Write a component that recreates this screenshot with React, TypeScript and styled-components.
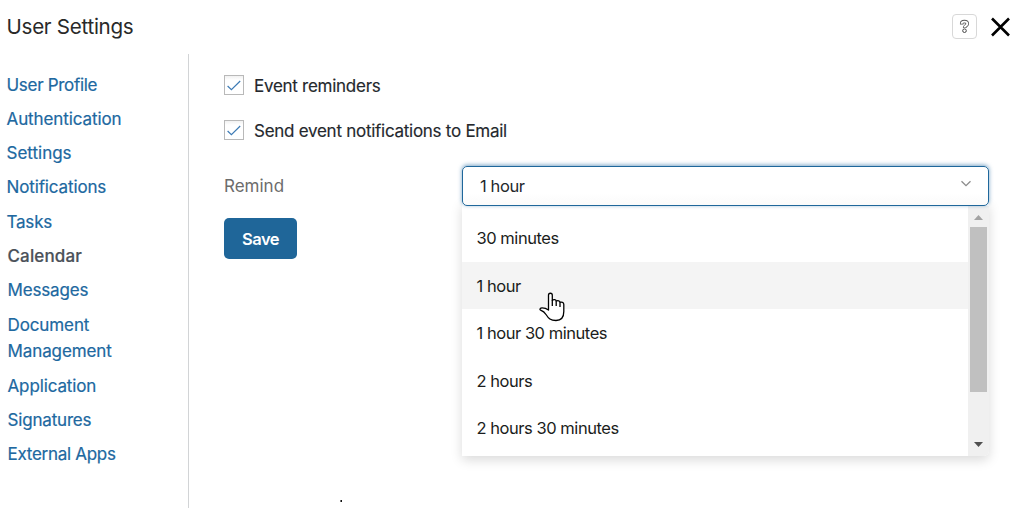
import React from "react";
import styled, { createGlobalStyle } from "styled-components";

const GlobalStyle = createGlobalStyle`
  * { box-sizing: border-box; }
  html, body { margin: 0; padding: 0; background: #fff; }
  body {
    font-family: Inter, "Liberation Sans", sans-serif;
    font-size: 17px;
    color: #24282d;
    overflow: hidden;
  }
`;

const Page = styled.div`
  width: 1016px;
  height: 508px;
  display: flex;
  flex-direction: column;
  overflow: hidden;
`;

const Header = styled.header`
  height: 54px;
  flex: none;
  display: flex;
  justify-content: space-between;
  padding: 13px 5px 0 6.5px;
`;

const Title = styled.h1`
  margin: 0;
  font-size: 20.6px;
  line-height: 27px;
  font-weight: 400;
  color: #292929;
  letter-spacing: -0.28px;
`;

const HeaderActions = styled.div`
  display: flex;
  align-items: flex-start;
  gap: 13px;
`;

const HelpButton = styled.button`
  width: 25px;
  height: 25px;
  margin-top: 1px;
  padding: 0;
  display: flex;
  align-items: center;
  justify-content: center;
  border: 1px solid #d8d8d8;
  border-radius: 4px;
  background: #fff;
`;

const CloseButton = styled.button`
  width: 21px;
  height: 20px;
  margin-top: 4px;
  padding: 0;
  border: 0;
  background: none;
  svg { display: block; }
`;

const Body = styled.div`
  flex: 1;
  display: flex;
  min-height: 0;
`;

const Sidebar = styled.nav`
  width: 189px;
  flex: none;
  border-right: 1px solid #d2d4d6;
  padding: 18px 60px 0 6.5px;
  display: flex;
  flex-direction: column;
  gap: 8px;
`;

const NavLink = styled.a<{ $active?: boolean; $spacing: number; $inset?: boolean; $lead?: boolean }>`
  line-height: 26px;
  margin-top: ${(p) => (p.$lead ? 1 : 0)}px;
  color: ${(p) => (p.$active ? "#4b5159" : "#20689f")};
  font-weight: ${(p) => (p.$active ? 500 : 400)};
  letter-spacing: ${(p) => p.$spacing}px;
  padding-left: ${(p) => (p.$inset ? 1 : 0)}px;
  -webkit-text-stroke: 0.2px currentColor;
`;

const Content = styled.main`
  flex: 1;
  display: flex;
  flex-direction: column;
  align-items: flex-start;
  padding: 19px 27px 0 35px;
`;

const CheckRow = styled.label`
  display: flex;
  align-items: center;
  gap: 10px;
  height: 26px;
  margin-bottom: 19px;
  letter-spacing: -0.27px;
  -webkit-text-stroke: 0.15px currentColor;
`;

const CheckBox = styled.span`
  width: 20px;
  height: 20px;
  margin-top: -2px;
  border: 1px solid #b9b9b9;
  background: linear-gradient(#f1f1f1, #fff 4px);
  svg { display: block; }
`;

const Field = styled.div`
  width: 765px;
  height: 41px;
  margin-top: 2px;
  display: flex;
  align-items: center;
`;

const FieldLabel = styled.span`
  width: 238px;
  color: #6c6c6c;
  letter-spacing: 0;
`;

const SelectWrap = styled.div`
  position: relative;
  width: 527px;
  height: 41px;
`;

const SelectBox = styled.div`
  position: relative;
  z-index: 2;
  height: 40px;
  margin-top: 1px;
  display: flex;
  align-items: center;
  justify-content: space-between;
  padding: 0 16px 0 17px;
  border: 1px solid #1f679b;
  border-radius: 5px;
  background: linear-gradient(#fff 70%, #fafafa);
  box-shadow: 0 -1px 4px rgba(32, 104, 159, 0.6);
  font-size: 16.5px;
  letter-spacing: -0.4px;
  svg { margin-top: -4px; }
`;

const Menu = styled.div`
  position: absolute;
  z-index: 1;
  top: 37px;
  left: 0;
  width: 527px;
  height: 254px;
  padding-top: 4px;
  display: flex;
  background: #fff;
  border-radius: 0 0 5px 0;
  box-shadow: 0 4px 12px rgba(0, 0, 0, 0.15);
`;

const OptionList = styled.div`
  flex: 1;
  padding-top: 8.3px;
`;

const Option = styled.div<{ $hover?: boolean }>`
  height: 47.45px;
  line-height: 48px;
  padding-left: 14.5px;
  font-size: 16.5px;
  letter-spacing: -0.46px;
  color: #1b1d20;
  background: ${(p) => (p.$hover ? "#f4f4f4" : "transparent")};
`;

const ScrollTrack = styled.div`
  width: 21px;
  display: flex;
  flex-direction: column;
  align-items: center;
  justify-content: space-between;
  padding: 0 0 9px;
  background: #f0f0f0;
  border-radius: 0 0 5px 0;
  svg { display: block; }
`;

const ScrollTop = styled.div`
  display: flex;
  flex-direction: column;
  align-items: center;
  padding-top: 9px;
  gap: 7px;
`;

const ScrollThumb = styled.div`
  width: 17px;
  height: 165px;
  background: #c0c0c0;
`;

const Pointer = styled.svg`
  position: absolute;
  z-index: 3;
  left: 77px;
  top: 127px;
`;

const SaveButton = styled.button`
  width: 73px;
  height: 41px;
  margin-top: 12px;
  padding: 0;
  border: 0;
  border-radius: 5px;
  background: #1f6699;
  color: #fff;
  font: 600 16.5px Inter, sans-serif;
  letter-spacing: -0.5px;
`;

const Speck = styled.span`
  width: 2px;
  height: 2px;
  margin: 241px 0 0 116px;
  background: linear-gradient(90deg, #777 50%, #111 50%);
`;

const links = [
  { label: "User Profile", spacing: -0.3 },
  { label: "Authentication", spacing: -0.1 },
  { label: "Settings", spacing: 0 },
  { label: "Notifications", spacing: -0.13 },
  { label: "Tasks", spacing: -0.2, lead: true },
  { label: "Calendar", spacing: 0.15, active: true, inset: true },
  { label: "Messages", spacing: -0.15, inset: true },
  { label: "Document Management", spacing: -0.1, inset: true, lead: true },
  { label: "Application", spacing: -0.13, inset: true, lead: true },
  { label: "Signatures", spacing: -0.18, inset: true },
  { label: "External Apps", spacing: -0.28, inset: true },
];

const options = ["30 minutes", "1 hour", "1 hour 30 minutes", "2 hours", "2 hours 30 minutes"];

const Tick = () => (
  <svg width="18" height="18" viewBox="0 0 18 18" fill="none">
    <path d="M2.6 10 6.4 13.6 15.2 5" stroke="#3d7bb5" strokeWidth="1.2" />
  </svg>
);

export default function App() {
  return (
    <Page>
      <GlobalStyle />
      <Header>
        <Title>User Settings</Title>
        <HeaderActions>
          <HelpButton aria-label="Help">
            <svg width="11" height="15" viewBox="0 0 11 15" fill="none">
              <path d="M2.7 5.4V4.5C2.7 3 3.8 2.6 5.4 2.6S8.3 3.2 8.3 4.7C8.3 6.7 5.6 6.5 5.6 9" stroke="#555" strokeWidth="3.5" />
              <path d="M2.7 4.7V4.5C2.7 3 3.8 2.6 5.4 2.6S8.3 3.2 8.3 4.7C8.3 6.7 5.6 6.5 5.6 8.4" stroke="#fff" strokeWidth="1.9" />
              <circle cx="5.5" cy="11.7" r="1.8" fill="#fff" stroke="#444" strokeWidth="1" />
            </svg>
          </HelpButton>
          <CloseButton aria-label="Close">
            <svg width="21" height="20" viewBox="0 0 21 20">
              <path d="M2 1.5 19 18.5M19 1.5 2 18.5" stroke="#000" strokeWidth="2.6" />
            </svg>
          </CloseButton>
        </HeaderActions>
      </Header>
      <Body>
        <Sidebar>
          {links.map((l) => (
            <NavLink key={l.label} $active={l.active} $spacing={l.spacing} $inset={l.inset} $lead={l.lead}>
              {l.label}
            </NavLink>
          ))}
        </Sidebar>
        <Content>
          <CheckRow>
            <CheckBox><Tick /></CheckBox>
            Event reminders
          </CheckRow>
          <CheckRow>
            <CheckBox><Tick /></CheckBox>
            Send event notifications to Email
          </CheckRow>
          <Field>
            <FieldLabel>Remind</FieldLabel>
            <SelectWrap>
              <SelectBox>
                1 hour
                <svg width="12" height="8" viewBox="0 0 12 8" fill="none">
                  <path d="M1.5 1.2 6 5.7l4.5-4.5" stroke="#8c8c8c" strokeWidth="1.3" />
                </svg>
              </SelectBox>
              <Menu>
                <OptionList>
                  {options.map((o) => (
                    <Option key={o} $hover={o === "1 hour"}>{o}</Option>
                  ))}
                </OptionList>
                <ScrollTrack>
                  <ScrollTop>
                    <svg width="9" height="5" viewBox="0 0 9 5"><path d="M4.5 0 9 5H0z" fill="#a3a3a3" /></svg>
                    <ScrollThumb />
                  </ScrollTop>
                  <svg width="9" height="5" viewBox="0 0 9 5"><path d="M0 0h9L4.5 5z" fill="#505050" /></svg>
                </ScrollTrack>
              </Menu>
              <Pointer width="27" height="30" viewBox="0 0 27 30">
                <path
                  d="M9.5 18V3.2C9.5.6 13.3.6 13.3 3.2V8.3C14.6 7 17.2 7.5 17.2 9.2 18.6 8.2 21 8.7 21 10.4 22.5 9.8 24.8 10.4 24.8 12.4V19.5C24.8 25.5 22 28.5 17 28.5 11.5 28.5 9.5 26.5 7 22.5 5.5 20 3.5 18.8 1.6 18.1.3 17.5 1.1 15.8 3.1 15.8 5.5 15.8 7.5 16.5 9.5 18Z"
                  fill="#fff" stroke="#000" strokeWidth="1.3" strokeLinejoin="round"
                />
                <path d="M13.3 8V14M17.2 9.2V14M21 10.4V15" stroke="#000" strokeWidth="1.3" fill="none" />
              </Pointer>
            </SelectWrap>
          </Field>
          <SaveButton>Save</SaveButton>
          <Speck />
        </Content>
      </Body>
    </Page>
  );
}
